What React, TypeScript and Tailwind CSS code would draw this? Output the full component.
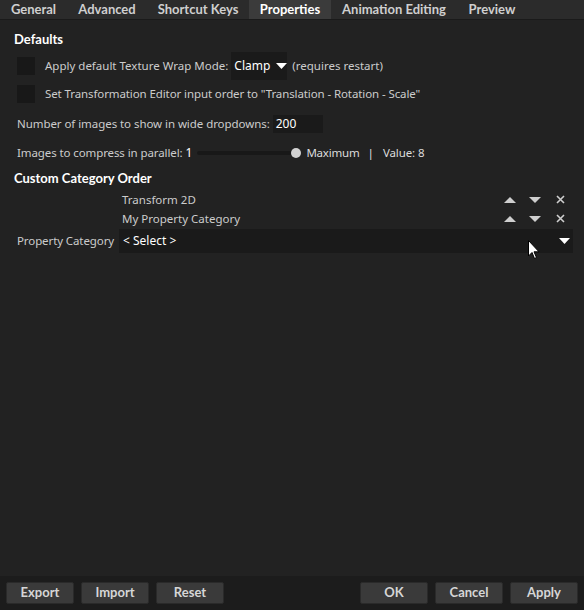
import React from "react";

const Up = () => (
  <svg width="12" height="6" viewBox="0 0 12 6"><path d="M0 6 L6 0 L12 6 Z" fill="#cfcfcf" /></svg>
);
const Down = () => (
  <svg width="12" height="6" viewBox="0 0 12 6"><path d="M0 0 L12 0 L6 6 Z" fill="#cfcfcf" /></svg>
);
const X = () => (
  <svg width="9" height="9" viewBox="0 0 9 9"><path d="M1 1 L8 8 M8 1 L1 8" stroke="#cfcfcf" strokeWidth="1.6" /></svg>
);

const tabs: [string, number, boolean][] = [
  ["General", 67, false],
  ["Advanced", 80, false],
  ["Shortcut Keys", 102, false],
  ["Properties", 82, true],
  ["Animation Editing", 126, false],
  ["Preview", 70, false],
];

const Btn = ({ label }: { label: string }) => (
  <div className="w-[68px] h-[22px] flex items-center justify-center bg-[#3a3a3a] border border-[#2a2a2a] rounded-[2px] font-['Lato',sans-serif] text-[13px] font-bold text-[#d6d6d6]">
    {label}
  </div>
);

const Icons = () => (
  <div className="flex items-center mr-[19px]">
    <Up />
    <div className="w-[13px]" />
    <Down />
    <div className="w-[15px]" />
    <X />
  </div>
);

export default function App() {
  return (
    <div className="relative w-[584px] h-[610px] bg-[#222222] flex flex-col font-['Noto_Sans',sans-serif] text-[11.5px] text-[#cccccc] overflow-hidden whitespace-nowrap">
      <div className="h-[19px] bg-[#2b2b2b] border-b border-[#1a1a1a] flex box-content font-['Lato',sans-serif]">
        {tabs.map(([t, w, a]) => (
          <div
            key={t}
            style={{ width: w }}
            className={
              "flex items-center justify-center text-[13px] font-bold " +
              (a ? "bg-[#3b3b3b] text-white" : "text-[#cfcfcf]")
            }
          >
            {t}
          </div>
        ))}
      </div>
      <div className="flex-1 flex flex-col">
        <div className="h-[10px]" />
        <div className="h-[19px] pl-[14px] flex items-center font-['Lato',sans-serif] text-[13px] font-bold text-white">Defaults</div>
        <div className="h-[28px] mt-[3px] flex items-center">
          <div className="ml-[17px] w-[18px] h-[18px] bg-[#181818]" />
          <span className="ml-[10px]">Apply default Texture Wrap Mode:</span>
          <div className="ml-[3px] h-[28px] w-[56px] bg-[#1a1a1a] flex items-center pl-[3px] text-[12px] text-white">
            Clamp
            <svg className="ml-[6px]" width="11" height="6" viewBox="0 0 11 6"><path d="M0 0 L11 0 L5.5 6 Z" fill="#ffffff" /></svg>
          </div>
          <span className="ml-[5px]">(requires restart)</span>
        </div>
        <div className="h-[26px] mt-[1px] flex items-center">
          <div className="ml-[17px] w-[18px] h-[18px] bg-[#181818]" />
          <span className="ml-[10px] tracking-[-0.1px]">Set Transformation Editor input order to "Translation - Rotation - Scale"</span>
        </div>
        <div className="h-[18px] mt-[8px] flex items-center pl-[17px]">
          <span className="tracking-[-0.06px]">Number of images to show in wide dropdowns:</span>
          <div className="ml-[3px] w-[50px] h-[18px] bg-[#1a1a1a] flex items-center pl-[3px] text-[12px] text-white">200</div>
        </div>
        <div className="h-[20px] mt-[10px] flex items-center pl-[17px]">
          <span className="tracking-[-0.1px]">Images to compress in parallel:</span>
          <span className="ml-[3px] text-[12px] text-white">1</span>
          <div className="ml-[5px] relative w-[99px] h-[4px] bg-[#181818] rounded-full">
            <div className="absolute right-[-5px] top-[-3px] w-[10px] h-[10px] rounded-full bg-[#d2d2d2]" />
          </div>
          <span className="ml-[10px] text-[#dcdcdc] tracking-[-0.2px]">Maximum</span>
          <span className="ml-[8px] text-[#e0e0e0]">|</span>
          <span className="ml-[9px] text-[#dcdcdc] tracking-[-0.1px]">Value: 8</span>
        </div>
        <div className="h-[19px] mt-[6px] pl-[14px] flex items-center font-['Lato',sans-serif] text-[13px] font-bold text-white">Custom Category Order</div>
        <div className="h-[19px] mt-[2px] flex items-center">
          <span className="ml-[122px] flex-1">Transform 2D</span>
          <Icons />
        </div>
        <div className="h-[19px] flex items-center">
          <span className="ml-[122px] flex-1">My Property Category</span>
          <Icons />
        </div>
        <div className="h-[24px] mt-[1px] flex items-center">
          <span className="ml-[17px] w-[102px] tracking-[-0.1px]">Property Category</span>
          <div className="w-[454px] h-[24px] bg-[#1a1a1a] flex items-center pl-[4px] pr-[3px] text-[12px] text-white">
            <span className="flex-1">&lt; Select &gt;</span>
            <svg width="11" height="6" viewBox="0 0 11 6"><path d="M0 0 L11 0 L5.5 6 Z" fill="#ffffff" /></svg>
          </div>
        </div>
      </div>
      <div className="h-[34px] bg-[#1c1c1c] flex items-center px-[6px]">
        <div className="flex gap-[7px]">
          <Btn label="Export" />
          <Btn label="Import" />
          <Btn label="Reset" />
        </div>
        <div className="flex-1" />
        <div className="flex gap-[7px]">
          <Btn label="OK" />
          <Btn label="Cancel" />
          <Btn label="Apply" />
        </div>
      </div>
      <svg className="absolute left-[528px] top-[240px]" width="13" height="20" viewBox="0 0 13 20">
        <path d="M0.5 0.5 L0.5 16 L4 12.5 L6.5 18.5 L8.5 17.5 L6 11.8 L11 11.8 Z" fill="#ffffff" stroke="#000000" strokeWidth="1" />
      </svg>
    </div>
  );
}
